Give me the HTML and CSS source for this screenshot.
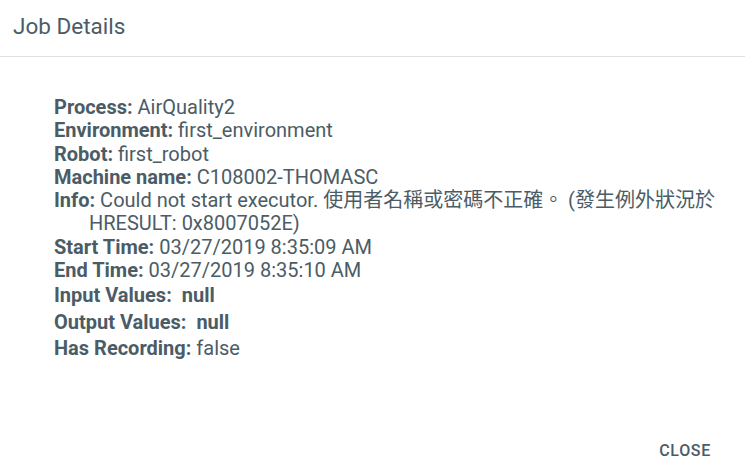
FILE: index.html
```html
<!DOCTYPE html>
<html lang="en">

<head>
    <meta charset="UTF-8">
    <title>Job Details</title>
    <link rel="stylesheet" href="styles.css">
</head>

<body>
    <div class="dialog">
        <div class="dialog-title">Job Details</div>
        <div class="dialog-content">
            <div class="row"><b>Process:</b> AirQuality2</div>
            <div class="row"><b>Environment:</b> first_environment</div>
            <div class="row"><b>Robot:</b> first_robot</div>
            <div class="row"><b>Machine name:</b> C108002-THOMASC</div>
            <div class="row wrap"><b>Info:</b> Could not start executor. 使用者名稱或密碼不正確。 (發生例外狀況於 HRESULT: 0x8007052E)</div>
            <div class="row"><b>Start Time:</b> 03/27/2019 8:35:09 AM</div>
            <div class="row"><b>End Time:</b> 03/27/2019 8:35:10 AM</div>
            <div class="row tall"><b>Input Values:&nbsp; null</b></div>
            <div class="row tall"><b>Output Values:&nbsp; null</b></div>
            <div class="row tall"><b>Has Recording:</b> false</div>
        </div>
        <div class="dialog-actions">
            <button class="close-btn">Close</button>
        </div>
    </div>
</body>

</html>
```

FILE: styles.css
```css
/* Reset styles */
* {
    margin: 0;
    padding: 0;
    box-sizing: border-box;
}

body {
    background: #fff;
    font-family: Roboto, "Noto Sans CJK TC", sans-serif;
    color: #4b5c66;
}

.dialog {
    width: 745px;
    height: 470px;
    display: flex;
    flex-direction: column;
}

.dialog-title {
    height: 57px;
    padding: 13px 13px 0;
    font-size: 22.5px;
    border-bottom: 1px solid #e0e0e0;
}

.dialog-content {
    padding: 39px 24px 0 54px;
    font-size: 20px;
    flex: 1;
}

.row {
    line-height: 23.3px;
}

.row b {
    font-weight: 700;
}

.wrap {
    padding-left: 35px;
    text-indent: -35px;
}

.tall {
    line-height: 26.5px;
}

.dialog-actions {
    display: flex;
    justify-content: flex-end;
    padding: 0 26px 4px 0;
}

.close-btn {
    background: none;
    border: none;
    font-family: Roboto, sans-serif;
    font-size: 16px;
    font-weight: 500;
    letter-spacing: 0.7px;
    color: #4b5c66;
    text-transform: uppercase;
    padding: 6px 8px;
    cursor: pointer;
}
```
